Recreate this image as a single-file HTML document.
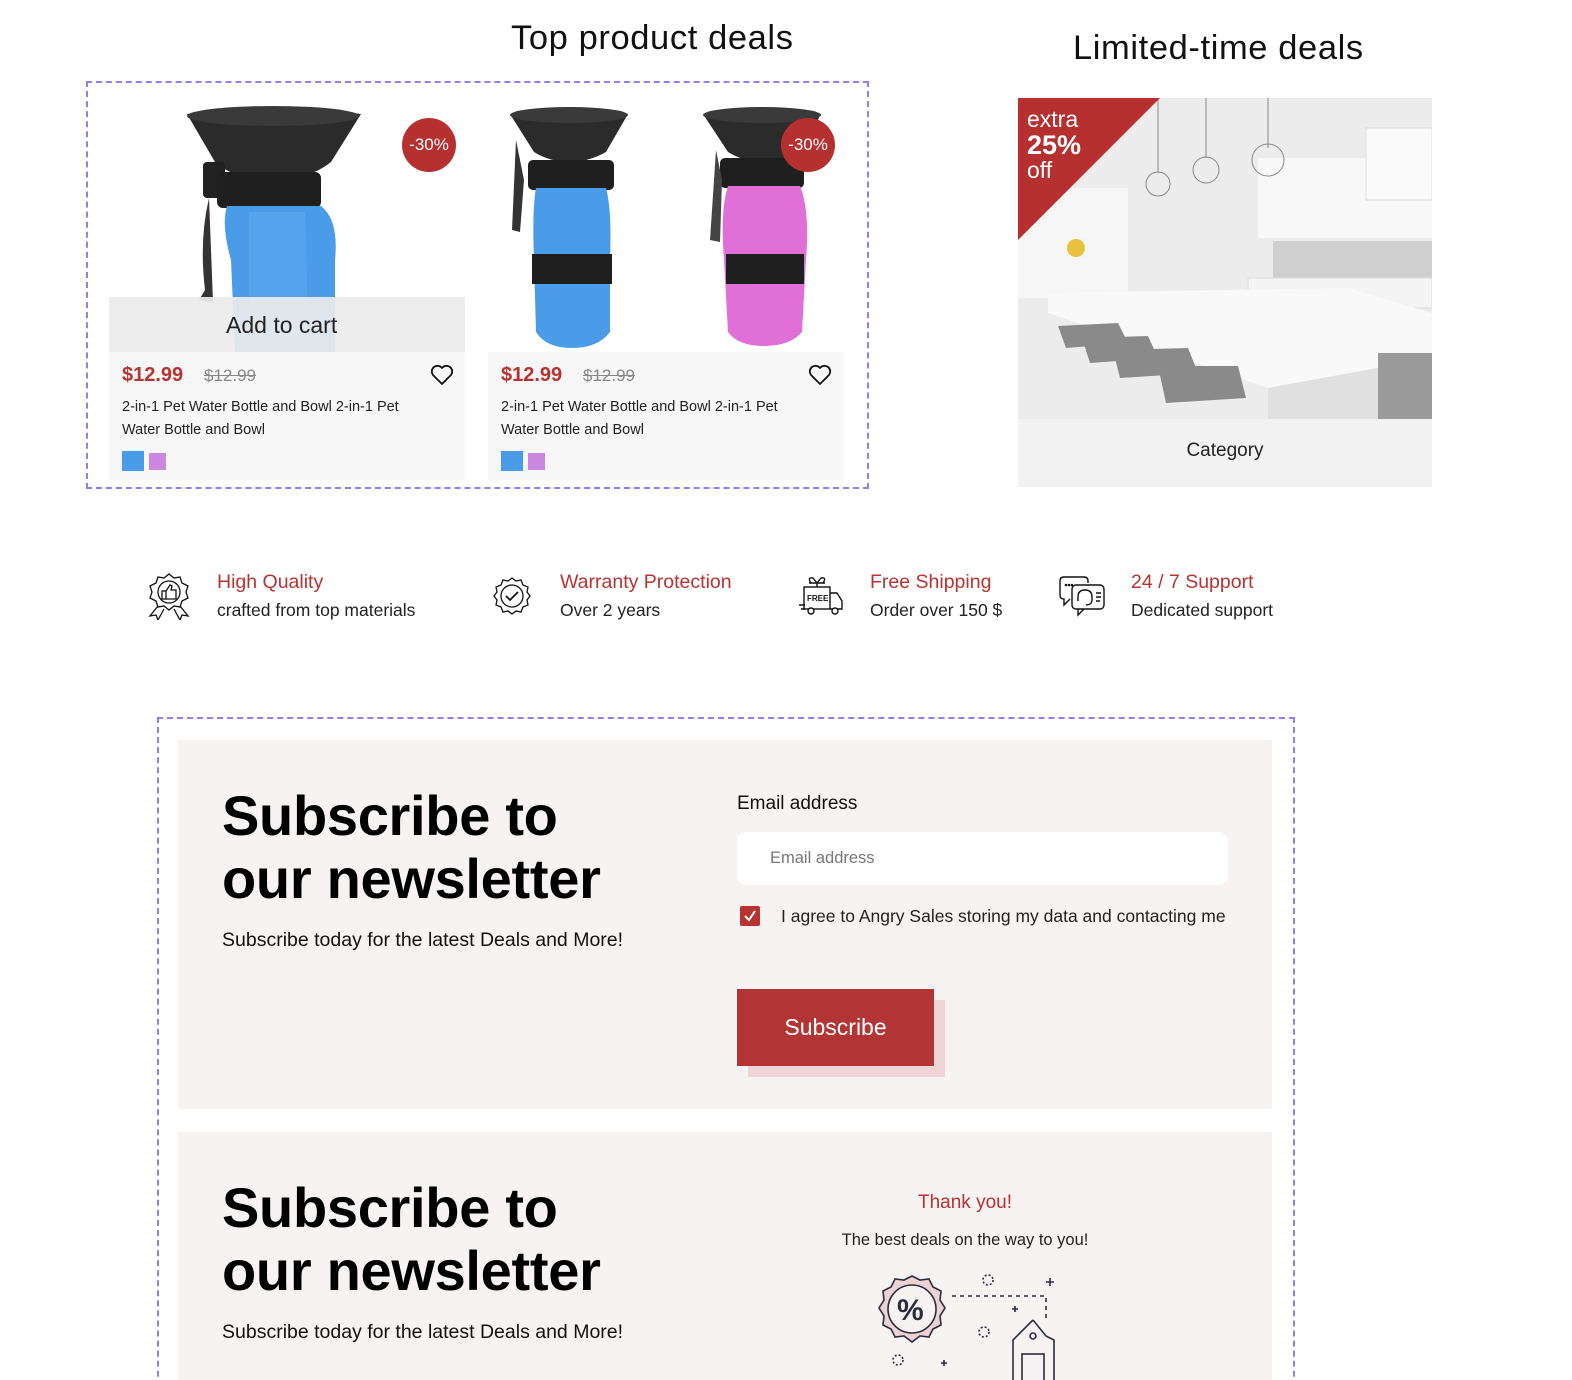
<!DOCTYPE html>
<html><head><meta charset="utf-8"><style>
*{margin:0;padding:0;box-sizing:border-box}
html,body{width:1572px;height:1380px;overflow:hidden}
body{background:#fff;font-family:"Liberation Sans",sans-serif;color:#111;position:relative}
.a{position:absolute}
.h2{font-size:34.5px;white-space:nowrap;letter-spacing:0.6px}
.dash{border:2px dashed #8e80f0}
.card{background:#f7f7f7}
.price{font-size:20px;font-weight:bold;color:#b83232}
.old{font-size:17px;color:#888;text-decoration:line-through}
.ttl{font-size:14.5px;line-height:23px;color:#222}
.badge{width:54px;height:54px;border-radius:50%;background:#b5302f;color:#fff;font-size:17px;text-align:center;line-height:54px}
.ft{font-size:19.5px;color:#b83232}
.fs{font-size:17.5px;color:#222}
.big{font-size:56px;font-weight:bold;line-height:63px;letter-spacing:-0.3px;color:#000}
</style></head><body>

<div class="a h2" style="left:511px;top:19px">Top product deals</div>
<div class="a h2" style="left:1073px;top:29px">Limited-time deals</div>

<div class="a dash" style="left:86px;top:81px;width:783px;height:408px"></div>

<!-- card 1 -->
<div class="a card" style="left:109px;top:352px;width:356px;height:128px"></div>
<svg class="a" style="left:109px;top:100px" width="356" height="252">
  <path d="M78 14 Q164 2 252 14 L222 62 Q200 80 162 80 Q126 80 106 62 Z" fill="#2b2b2b"/>
  <ellipse cx="164" cy="16" rx="86" ry="10" fill="#3a3a3a"/>
  <rect x="94" y="62" width="22" height="36" rx="4" fill="#222"/>
  <path d="M100 98 Q90 140 96 190 L90 200 L104 202 Z" fill="#333"/>
  <rect x="108" y="72" width="104" height="36" rx="6" fill="#1f1f1f"/>
  <path d="M118 106 L212 106 Q230 120 226 160 L226 252 L126 252 L122 160 Q112 125 118 106Z" fill="#4a9be8"/>
  <path d="M140 112 L196 112 L200 252 L140 252Z" fill="#5aa8f0" opacity=".6"/>
</svg>
<div class="a" style="left:109px;top:297px;width:356px;height:55px;background:rgba(236,236,236,.92)"></div>
<div class="a" style="left:226px;top:312px;font-size:23px;color:#222">Add to cart</div>
<div class="a badge" style="left:402px;top:118px">-30%</div>
<div class="a price" style="left:122px;top:364px">$12.99</div>
<div class="a old" style="left:204px;top:366px">$12.99</div>
<svg class="a" style="left:430px;top:364px" width="24" height="22" viewBox="0 0 24 22"><path d="M12 20 L3 11 A5 5 0 0 1 12 4 A5 5 0 0 1 21 11 Z" fill="none" stroke="#111" stroke-width="1.8" stroke-linejoin="round"/></svg>
<div class="a ttl" style="left:122px;top:396px;width:300px">2-in-1 Pet Water Bottle and Bowl 2-in-1 Pet Water Bottle and Bowl</div>
<div class="a" style="left:122px;top:451px;width:22px;height:20px;background:#4a9be8"></div>
<div class="a" style="left:149px;top:453px;width:17px;height:17px;background:#cc88e0"></div>

<!-- card 2 -->
<div class="a card" style="left:488px;top:352px;width:356px;height:128px"></div>
<svg class="a" style="left:488px;top:100px" width="356" height="252">
  <path d="M22 14 Q82 4 140 14 L118 52 Q100 62 82 62 Q62 62 46 52Z" fill="#2b2b2b"/>
  <ellipse cx="81" cy="15" rx="59" ry="8" fill="#3a3a3a"/>
  <rect x="40" y="60" width="86" height="30" rx="5" fill="#1f1f1f"/>
  <path d="M28 40 L24 130 L32 132 L36 80Z" fill="#333"/>
  <path d="M48 88 L118 88 Q124 110 122 160 L122 232 Q110 248 84 248 Q58 248 48 232 L46 160 Q44 110 48 88Z" fill="#4a9be8"/>
  <rect x="44" y="154" width="80" height="30" fill="#1e1e1e"/>
  <path d="M215 14 Q275 4 333 14 L312 52 Q294 62 276 62 Q256 62 240 52Z" fill="#2b2b2b"/>
  <ellipse cx="274" cy="15" rx="59" ry="8" fill="#3a3a3a"/>
  <rect x="232" y="58" width="84" height="30" rx="5" fill="#1f1f1f"/>
  <path d="M228 50 L222 140 L232 142 L234 80Z" fill="#444"/>
  <path d="M240 86 L312 86 Q322 110 318 160 L314 232 Q302 246 276 246 Q250 246 240 232 L236 160 Q232 110 240 86Z" fill="#e070d8"/>
  <rect x="238" y="154" width="78" height="30" fill="#1e1e1e"/>
</svg>
<div class="a badge" style="left:781px;top:118px">-30%</div>
<div class="a price" style="left:501px;top:364px">$12.99</div>
<div class="a old" style="left:583px;top:366px">$12.99</div>
<svg class="a" style="left:808px;top:364px" width="24" height="22" viewBox="0 0 24 22"><path d="M12 20 L3 11 A5 5 0 0 1 12 4 A5 5 0 0 1 21 11 Z" fill="none" stroke="#111" stroke-width="1.8" stroke-linejoin="round"/></svg>
<div class="a ttl" style="left:501px;top:396px;width:300px">2-in-1 Pet Water Bottle and Bowl 2-in-1 Pet Water Bottle and Bowl</div>
<div class="a" style="left:501px;top:451px;width:22px;height:20px;background:#4a9be8"></div>
<div class="a" style="left:528px;top:453px;width:17px;height:17px;background:#cc88e0"></div>

<!-- kitchen -->
<div class="a" style="left:1018px;top:419px;width:414px;height:68px;background:#f2f2f2"></div>
<div class="a" style="left:1018px;top:440px;width:414px;text-align:center;font-size:19px;color:#222">Category</div>
<svg class="a" style="left:1018px;top:98px" width="414" height="321">
  <rect width="414" height="321" fill="#ececec"/>
  <rect x="0" y="90" width="110" height="110" fill="#f6f6f6"/>
  <rect x="240" y="60" width="174" height="80" fill="#f8f8f8"/>
  <rect x="348" y="30" width="66" height="72" fill="#fafafa" stroke="#ddd"/>
  <rect x="255" y="143" width="160" height="40" fill="#cfcfcf"/>
  <rect x="230" y="180" width="184" height="30" fill="#f4f4f4" stroke="#ddd"/>
  <path d="M30 195 L330 190 L414 215 L414 260 L250 290 L30 215Z" fill="#f9f9f9"/>
  <path d="M250 290 L414 260 L414 321 L250 321Z" fill="#e0e0e0"/>
  <g fill="#8a8a8a"><path d="M40 228 L100 225 L110 245 L48 250Z"/><path d="M64 240 L130 238 L140 260 L72 265Z"/><path d="M95 252 L170 250 L180 275 L102 280Z"/><path d="M140 268 L220 268 L228 300 L148 305Z"/></g>
  <rect x="360" y="255" width="54" height="66" fill="#9a9a9a"/>
  <g stroke="#888" fill="none"><line x1="140" y1="0" x2="140" y2="75"/><line x1="188" y1="0" x2="188" y2="60"/><line x1="250" y1="0" x2="250" y2="50"/><circle cx="140" cy="86" r="12"/><circle cx="188" cy="72" r="13"/><circle cx="250" cy="62" r="16"/></g>
  <circle cx="58" cy="150" r="9" fill="#e6c23c"/>
  <path d="M0 0 L142 0 L0 142Z" fill="#b5302f"/>
  <text x="9" y="29" fill="#fff" font-size="23" font-family="Liberation Sans">extra</text>
  <text x="9" y="56" fill="#fff" font-size="27" font-weight="bold" font-family="Liberation Sans">25%</text>
  <text x="9" y="80" fill="#fff" font-size="23" font-family="Liberation Sans">off</text>
</svg>

<!-- features -->
<svg class="a" style="left:146px;top:572px" width="46" height="48" viewBox="0 0 46 48" fill="none" stroke="#111" stroke-width="1.3">
  <path d="M23 2 L28 6 L34 5 L36 11 L42 14 L40 20 L42 26 L36 29 L34 35 L28 34 L23 38 L18 34 L12 35 L10 29 L4 26 L6 20 L4 14 L10 11 L12 5 L18 6Z"/>
  <circle cx="23" cy="20" r="11"/><rect x="16" y="19" width="4" height="8"/><path d="M20 19 L24 13 L26 14 L25 18 L30 18 L30 27 L20 27"/>
  <path d="M12 34 L4 44 L10 43 L12 48 L18 37 M34 34 L42 44 L36 43 L34 48 L28 37"/>
</svg>
<div class="a ft" style="left:217px;top:571px">High Quality</div>
<div class="a fs" style="left:217px;top:600px">crafted from top materials</div>
<svg class="a" style="left:492px;top:576px" width="40" height="40" viewBox="0 0 40 40" fill="none" stroke="#111" stroke-width="1.3">
  <path d="M20 2 L24 5 L29 4 L31 9 L36 11 L35 16 L38 20 L35 24 L36 29 L31 31 L29 36 L24 35 L20 38 L16 35 L11 36 L9 31 L4 29 L5 24 L2 20 L5 16 L4 11 L9 9 L11 4 L16 5Z"/>
  <circle cx="20" cy="20" r="11"/><path d="M14 20 L18 24 L26 16" stroke-width="1.8"/>
</svg>
<div class="a ft" style="left:560px;top:571px">Warranty Protection</div>
<div class="a fs" style="left:560px;top:600px">Over 2 years</div>
<svg class="a" style="left:799px;top:575px" width="46" height="42" viewBox="0 0 46 42" fill="none" stroke="#111" stroke-width="1.4">
  <path d="M12 8 Q8 2 14 3 L18 8 L22 3 Q28 2 24 8 M10 8 L26 8 M18 8 L18 12"/>
  <rect x="5" y="12" width="26" height="22"/><path d="M31 18 L38 18 L43 26 L43 34 L31 34"/>
  <text x="8" y="26" font-size="8" font-weight="bold" fill="#111" stroke="none" font-family="Liberation Sans">FREE</text>
  <circle cx="12" cy="36" r="3" fill="#fff"/><circle cx="36" cy="36" r="3" fill="#fff"/><path d="M0 30 L6 30 M2 34 L6 34"/>
</svg>
<div class="a ft" style="left:870px;top:571px">Free Shipping</div>
<div class="a fs" style="left:870px;top:600px">Order over 150 $</div>
<svg class="a" style="left:1058px;top:575px" width="50" height="42" viewBox="0 0 50 42" fill="none" stroke="#111" stroke-width="1.4">
  <path d="M6 2 L26 2 Q30 2 30 6 L30 8 M6 2 Q2 2 2 6 L2 20 Q2 24 6 24 L6 30 L12 24"/>
  <circle cx="8" cy="10" r=".6"/><circle cx="11" cy="10" r=".6"/><circle cx="14" cy="10" r=".6"/>
  <rect x="14" y="10" width="32" height="24" rx="4"/><path d="M20 34 L20 40 L26 34"/>
  <path d="M20 26 L20 22 Q20 15 27 15 Q34 15 34 22 L34 26"/><path d="M34 26 Q33 30 28 30"/>
  <path d="M38 18 L43 18 M38 22 L43 22 M38 26 L42 26"/>
</svg>
<div class="a ft" style="left:1131px;top:571px">24 / 7 Support</div>
<div class="a fs" style="left:1131px;top:600px">Dedicated support</div>

<!-- newsletter -->
<div class="a dash" style="left:157px;top:717px;width:1138px;height:700px"></div>
<div class="a" style="left:178px;top:740px;width:1094px;height:369px;background:#f8f3f3"></div>
<div class="a big" style="left:222px;top:784px">Subscribe to<br>our newsletter</div>
<div class="a" style="left:222px;top:929px;font-size:19.5px">Subscribe today for the latest Deals and More!</div>
<div class="a" style="left:737px;top:793px;font-size:19px">Email address</div>
<div class="a" style="left:737px;top:832px;width:491px;height:53px;background:#fff;border-radius:10px"></div>
<div class="a" style="left:770px;top:849px;font-size:16.5px;color:#777">Email address</div>
<div class="a" style="left:740px;top:906px;width:20px;height:20px;background:#b83232;border-radius:2px"></div>
<svg class="a" style="left:740px;top:906px" width="20" height="20"><path d="M5 10 L9 14 L15 5" fill="none" stroke="#fff" stroke-width="2"/></svg>
<div class="a" style="left:781px;top:906px;font-size:17.5px;color:#222">I agree to Angry Sales storing my data and contacting me</div>
<div class="a" style="left:748px;top:1000px;width:197px;height:77px;background:#f0d5d6"></div>
<div class="a" style="left:737px;top:989px;width:197px;height:77px;background:#b33434;color:#fff;font-size:23px;text-align:center;line-height:77px">Subscribe</div>

<div class="a" style="left:178px;top:1132px;width:1094px;height:300px;background:#f8f3f3"></div>
<div class="a big" style="left:222px;top:1176px">Subscribe to<br>our newsletter</div>
<div class="a" style="left:222px;top:1321px;font-size:19.5px">Subscribe today for the latest Deals and More!</div>
<div class="a" style="left:778px;top:1192px;width:374px;text-align:center;font-size:19px;color:#b83232">Thank you!</div>
<div class="a" style="left:778px;top:1231px;width:374px;text-align:center;font-size:16.5px;color:#222">The best deals on the way to you!</div>
<svg class="a" style="left:870px;top:1270px" width="200" height="110" viewBox="0 0 200 110" fill="none" stroke="#2a2d3e" stroke-width="1.6">
  <path d="M42 6 L50 10 L59 9 L63 17 L71 21 L70 30 L75 38 L70 46 L71 55 L63 59 L59 67 L50 66 L42 72 L34 66 L25 67 L21 59 L13 55 L14 46 L9 38 L14 30 L13 21 L21 17 L25 9 L34 10Z" fill="#ecd3d3"/>
  <circle cx="42" cy="39" r="24" fill="#f8f3f3"/>
  <text x="27" y="50" font-size="30" font-weight="bold" fill="#2a2d3e" stroke="none" font-family="Liberation Sans">%</text>
  <path d="M82 26 L176 26 L176 50" stroke-dasharray="4 4"/>
  <path d="M163 50 L176 66 M163 50 L143 70 L143 110 M176 66 L184 70 L184 110"/><circle cx="163" cy="66" r="3"/>
  <rect x="152" y="84" width="22" height="30"/>
  <circle cx="118" cy="10" r="5" stroke-dasharray="2 2"/><circle cx="114" cy="62" r="5" stroke-dasharray="2 2"/><circle cx="28" cy="90" r="5" stroke-dasharray="2 2"/>
  <path d="M180 8 L180 16 M176 12 L184 12 M145 36 L145 42 M142 39 L148 39 M74 90 L74 96 M71 93 L77 93"/>
</svg>
</body></html>
